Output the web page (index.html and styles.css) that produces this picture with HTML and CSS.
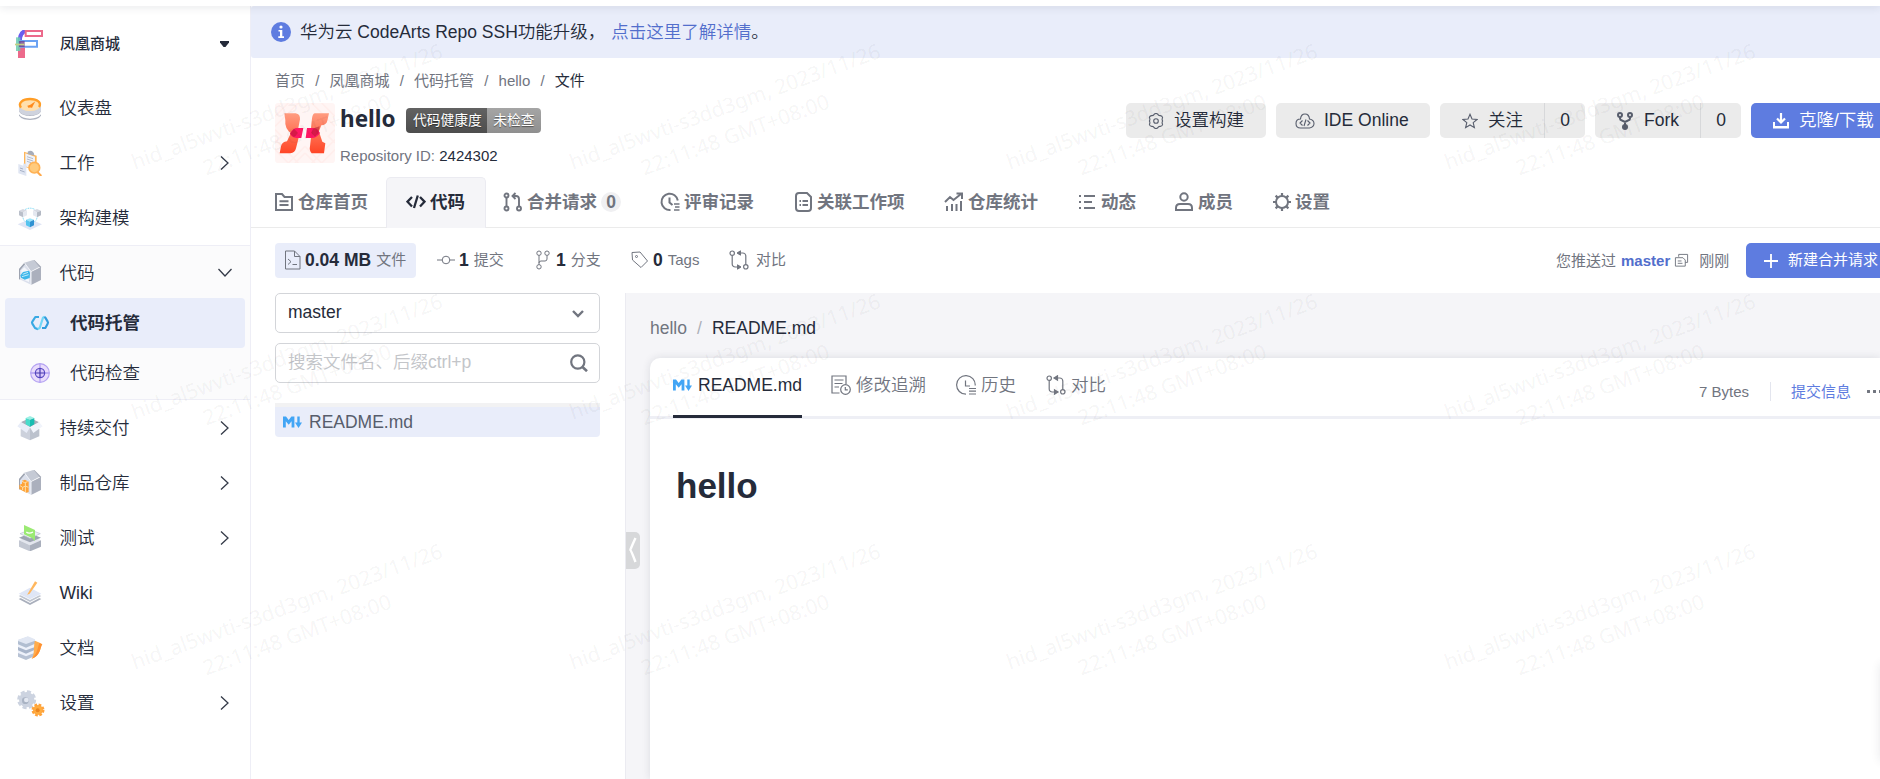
FILE: index.html
```html
<!DOCTYPE html>
<html lang="zh-CN">
<head>
<meta charset="utf-8">
<title>hello - 代码托管</title>
<link rel="stylesheet" href="styles.css">
</head>
<body>
<svg class="defs" aria-hidden="true">
  <defs>
    <symbol id="chev-right" viewBox="0 0 12 16"><path d="M2 1.5 9 8 2 14.5" fill="none" stroke="currentColor" stroke-width="1.3"/></symbol>
    <symbol id="compare" viewBox="0 0 20 20"><g fill="none" stroke="currentColor" stroke-width="1.2"><circle cx="3.2" cy="3.2" r="2.2"/><circle cx="16.8" cy="16.8" r="2.2"/><path d="M3.2 5.400V14a3 3 0 0 0 3 3H11M16.800 14.600V6a3 3 0 0 0-3-3H9"/></g><path d="M8 3 11.500.8v4.400zM12 17 8.500 14.800v4.400z" fill="currentColor"/></symbol>
    <symbol id="md" viewBox="0 0 19 14"><path d="M0 12.500V1.500h3l2.700 3.500L8.400 1.500H11.400v11H8.600V6.200L5.700 9.800 2.800 6.200V12.500zM14.300 1.500h2.400v6H19L15.500 13 12 7.500h2.300z" fill="#42a5f5"/></symbol>
    <symbol id="history" viewBox="0 0 20 20"><g fill="none" stroke="currentColor" stroke-width="1.2"><path d="M10 19.200A9.300 9.300 0 1 1 19.200 10.500"/><path d="M9.500 5.500V11H14M13 13.500h7M13 16.200h7M13 19h7"/></g></symbol>
  </defs>
</svg>
<div class="topbar"></div>
<div class="app">
  <aside class="sidebar">
    <div class="project">
      <svg class="project-logo" viewBox="0 0 84 84"><path d="M9 84V35h21v49z" fill="#ec6a8b"/><path d="M14 38c0-22 6-35 22-35" fill="none" stroke="#6a5cf0" stroke-width="12"/><path d="M22 30c0-10 4-18 13-22h3v8c-8 3-9 7-9 14z" fill="#fff" opacity=".65"/><path d="M32 3h49v15H32z" fill="#fff" stroke="#ec6a8b" stroke-width="6"/><path d="M14 33h52v17H14z" fill="#fff" stroke="#6ba2f3" stroke-width="6"/><path d="M3 22h13v41H3z" fill="#6dceb2" opacity=".85"/><path d="M12 33h17v18H12z" fill="#6d3f91" opacity=".8"/><path d="M0 41h28v5H0z" fill="#c5cf86"/></svg>
      <span class="project-name">凤凰商城</span>
      <svg class="caret" viewBox="0 0 9 7"><path d="M0 0h9v1.500L5.500 6h-2L0 1.500z" fill="#252b3a"/></svg>
    </div>
    <a class="nav">
      <svg class="nav-icon" viewBox="0 0 78 78"><path d="M6 38v23c3 8 14 14 33 14s30-6 33-14V38z" fill="#adb2bf"/><path d="M6 49c6 10 18 14 33 14s27-4 33-14v9c-6 9-18 13-33 13S12 67 6 58z" fill="#fff"/><path d="M6 31v17c4 8 15 13 33 13s29-5 33-13V31z" fill="#cfd3de"/><ellipse cx="39" cy="29" rx="33" ry="19" fill="#ffe0ae"/><path d="M12 38C2 24 17 12 39 12s36 11 27 24" fill="none" stroke="#ff9d26" stroke-width="7"/><path d="M34 34 55 19 45 38z" fill="#ff8a1c"/><path d="M31 32l11-3 4 8-12 1z" fill="#ff8a1c"/></svg>
      <span>仪表盘</span>
    </a>
    <a class="nav">
      <svg class="nav-icon" viewBox="0 0 78 78"><path d="M21 5l38 12v44L21 50z" fill="#ffb657"/><path d="M25 10l29 10v39L25 49z" fill="#eef1f8"/><path d="M32 5c8-6 20-2 20 12l-20-5z" fill="#a7adba"/><path d="M30 20l18 6M30 27l18 6M30 34l12 4" stroke="#b5bdcb" stroke-width="3"/><path d="M4 42l15 5v-7l9 3v35L4 70z" fill="#dfe5f2"/><path d="M9 54l9 3M9 61l14 5" stroke="#a7b2c7" stroke-width="3"/><path d="M61 66 73 78" stroke="#ffa94b" stroke-width="6"/><circle cx="52" cy="53" r="16" fill="#ffcb7d" stroke="#ffb255" stroke-width="5"/></svg>
      <span>工作</span>
      <svg class="chev"><use href="#chev-right"/></svg>
    </a>
    <a class="nav">
      <svg class="nav-icon" viewBox="0 0 78 78"><path d="M2 58 39 42l36 16-36 17z" fill="#dfe5f5"/><path d="M24 14c8-6 22-6 30 0M18 38c2 10 8 13 12 15M60 38c-2 10-8 13-12 15" fill="none" stroke="#67d1f2" stroke-width="2.500" stroke-dasharray="3 2"/><path d="M6 17l12-5 12 5-12 5z" fill="#d5d9e2"/><path d="M6 17l12 5v15L6 31z" fill="#b9bfca"/><path d="M30 17l-12 5v15l12-6z" fill="#e4e8f0"/><path d="M48 17l12-5 12 5-12 5z" fill="#d5d9e2"/><path d="M48 17l12 5v15l-12-6z" fill="#e4e8f0"/><path d="M72 17l-12 5v15l12-6z" fill="#b3b9c4"/><path d="M27 44l12-4 12 4-12 6z" fill="#9de5fb"/><path d="M27 44l12 6v17l-12-6z" fill="#55c3ee"/><path d="M51 44l-12 6v17l12-6z" fill="#3092d2"/></svg>
      <span>架构建模</span>
    </a>
    <div class="nav-group">
      <a class="nav">
        <svg class="nav-icon" viewBox="0 0 78 78"><path d="M6 27 24 8l18 18v48L6 57z" fill="#dbe0ec"/><path d="M13 31l9-9 14 13v31L13 56z" fill="#f4f6fb"/><path d="M22 8 49 0l19 20-26 14z" fill="#c5cad5"/><path d="M6 27 22 8l3 4L9 31v28l-3-2z" fill="#9da3b0"/><path d="M42 36l30-15v39L42 75z" fill="#abb0bd"/><path d="M22 8 42 35v40" fill="none" stroke="#f1f3f8" stroke-width="3"/><path d="M49 0l4 1 20 20-3 3z" fill="#a3a9b6"/><path d="M10 46l8-10 18-4 3 7-1 15-15 5-11-6z" fill="#3eb6ea"/><path d="M17 43l16-6M15 50l20-6" stroke="#bdeafb" stroke-width="3"/></svg>
        <span>代码</span>
        <svg class="chev-down" viewBox="0 0 16 12"><path d="M1.500 2 8 9l6.500-7" fill="none" stroke="currentColor" stroke-width="1.300"/></svg>
      </a>
      <a class="subnav active">
        <svg class="sub-icon" viewBox="0 0 60 60"><g fill="none" stroke-width="6.500" stroke-linejoin="round"><path d="M27 12H16L7 26q-2 3 0 6l8 13 9 4" stroke="#39a9e3"/><path d="M23 48l6-3L39 14l5-3" stroke="#72d7f6"/><path d="M43 12l3 2 7 12q2 3 0 6l-7 13H36" stroke="#319cdd"/></g></svg>
        <span>代码托管</span>
      </a>
      <a class="subnav">
        <svg class="sub-icon" viewBox="0 0 60 60"><circle cx="30" cy="30" r="28" fill="#e9dcfb" stroke="#b3a1f2" stroke-width="3.500"/><path d="M30 2v56M2 30h56" stroke="#b3a1f2" stroke-width="4"/><circle cx="30" cy="30" r="14" fill="#d9c8fa" stroke="#5b4cc4" stroke-width="3.500"/><path d="M30 16v28M16 30h28" stroke="#4739ad" stroke-width="3.500"/></svg>
        <span>代码检查</span>
      </a>
    </div>
    <a class="nav">
      <svg class="nav-icon" viewBox="0 0 78 78"><path d="M11 22 39 9l28 13-28 15z" fill="#a9afbb"/><path d="M11 42v22l28 12V38z" fill="#ccd1dc"/><path d="M67 42v22L39 76V38z" fill="#bcc2cd"/><path d="M26 9 39 3l13 6-13 6z" fill="#9df0e4"/><path d="M26 9l13 6v20l-13-7z" fill="#46dccb"/><path d="M52 9l-13 6v20l13-7z" fill="#18bdb2"/><path d="M1 34 12 21l27 16-10 17z" fill="#e8edf8"/><path d="M77 34 66 21 39 37l10 17z" fill="#f1f4fb"/></svg>
      <span>持续交付</span><svg class="chev"><use href="#chev-right"/></svg>
    </a>
    <a class="nav">
      <svg class="nav-icon" viewBox="0 0 78 78"><path d="M6 27 24 8l18 18v48L6 57z" fill="#dbe0ec"/><path d="M22 8 49 0l19 20-26 14z" fill="#c5cad5"/><path d="M6 27 22 8l3 4L9 31v28l-3-2z" fill="#9da3b0"/><path d="M42 36l30-15v39L42 75z" fill="#abb0bd"/><path d="M22 8 42 35v40" fill="none" stroke="#f1f3f8" stroke-width="3"/><path d="M49 0l4 1 20 20-3 3z" fill="#a3a9b6"/><path d="M7 45l8-4v-9l9-3 11 6v31l-7 2-21-11z" fill="#ffa236"/><path d="M15 34l8 4 9-3M9 47l8 5 9-4 8 4M25 39v27M17 52v8" fill="none" stroke="#ffe0a8" stroke-width="3"/></svg>
      <span>制品仓库</span><svg class="chev"><use href="#chev-right"/></svg>
    </a>
    <a class="nav">
      <svg class="nav-icon" viewBox="0 0 78 78"><path d="M6 46l33-14 33 14-33 15z" fill="#e3e6ee"/><path d="M6 46l33 15v18L6 65z" fill="#c2c7d2"/><path d="M72 46L39 61v18l33-14z" fill="#a9afbc"/><path d="M6 38l33-13 33 13-33 14z" fill="#9da4b1"/><path d="M9 26l30-12 31 12-31 14z" fill="#edf0f6" stroke="#bac0cb" stroke-width="2"/><path d="M21 0l33 15v33l-9-9-24-11z" fill="#9bea73"/><path d="M28 21c7 6 13 4 20 0" fill="none" stroke="#fff" stroke-width="4"/></svg>
      <span>测试</span><svg class="chev"><use href="#chev-right"/></svg>
    </a>
    <a class="nav">
      <svg class="nav-icon" viewBox="0 0 78 78"><path d="M5 57l34-15 34 15-34 18z" fill="#a9afbc"/><path d="M5 51l34-15 34 15-34 18z" fill="#fff"/><path d="M5 48l34-15 34 15-34 18z" fill="#bfc5d0"/><path d="M5 43l34-15 34 15-34 17z" fill="#fff"/><path d="M5 41l34-18 34 18-34 17z" fill="#dfe6f6"/><path d="M33 40 54 4l7 4-22 32-8 5z" fill="#ffb75e"/></svg>
      <span>Wiki</span>
    </a>
    <a class="nav">
      <svg class="nav-icon" viewBox="0 0 78 78"><path d="M3 48l29-11 22 10v16L27 75 3 65z" fill="#b7c2d4"/><path d="M3 54l24 10 27-11v-8L30 36 3 45z" fill="#edf1fa"/><path d="M3 33l29-11 22 10v12L27 56 3 46z" fill="#a8b5ca"/><path d="M3 36l24 10 27-10v-8L30 17 3 28z" fill="#edf1fa"/><path d="M3 16 32 5l22 10v11L27 38 3 28z" fill="#b1bed1"/><path d="M3 18l24 9 27-10v-4L33 4 3 14z" fill="#e1e7f3"/><path d="M54 17c10 4 16 7 22 11-6 4-4 36-32 43 10-12 5-44 10-54z" fill="#ffad4d"/><path d="M67 24c-5 15-6 31-23 47 27-6 25-35 32-43z" fill="#ff9131"/></svg>
      <span>文档</span>
    </a>
    <a class="nav">
      <svg class="nav-icon wide" viewBox="0 0 84 84"><circle cx="29" cy="32" r="23" fill="#ccd3e0"/><circle cx="29" cy="32" r="24" fill="none" stroke="#ccd3e0" stroke-width="9" stroke-dasharray="12 6.850"/><circle cx="25" cy="35" r="10" fill="#a9b3c3"/><circle cx="28" cy="33" r="7" fill="#e3e8f1"/><circle cx="63" cy="63" r="15" fill="#ffac40"/><circle cx="63" cy="63" r="16" fill="none" stroke="#ffa23a" stroke-width="7" stroke-dasharray="8 4.560"/><circle cx="62" cy="64" r="6" fill="#ec851e"/></svg>
      <span>设置</span><svg class="chev"><use href="#chev-right"/></svg>
    </a>
  </aside>

  <main class="main">
    <div class="banner">
      <svg class="info" viewBox="0 0 20 20"><circle cx="10" cy="10" r="10" fill="#5e7ce0"/><circle cx="10" cy="5" r="1.600" fill="#fff"/><path d="M7.500 8h3.800v6.200H13V16H7.300v-1.800H9V9.600H7.500z" fill="#fff"/></svg>
      <span>华为云 CodeArts Repo SSH功能升级，</span><a class="link">点击这里了解详情</a><span>。</span>
    </div>
    <nav class="crumbs"><span>首页</span><i>/</i><span>凤凰商城</span><i>/</i><span>代码托管</span><i>/</i><span>hello</span><i>/</i><b>文件</b></nav>

    <header class="repo">
      <svg class="repo-logo" viewBox="0 0 180 180">
        <defs><linearGradient id="lg" x1="0" y1="0" x2="0" y2="1"><stop offset="0" stop-color="#ff9c80"/><stop offset="1" stop-color="#ff4526"/></linearGradient></defs>
        <rect width="180" height="180" rx="10" fill="#fff5f4"/>
        <path d="M0 40 40 0M0 70 70 0M110 0l70 70M140 0l40 40M0 110l70 70M0 140l40 40M180 110l-70 70M180 140l-40 40M90 130l-50 50M90 130l50 50M90 150l-30 30M90 150l30 30M0 80l20 20-20 20M180 80l-20 20 20 20" stroke="#ffeeec" stroke-width="5" fill="none"/>
        <path d="M28 31H62Q76 33 75 49L70 75 49 92Q28 76 31 52zM119 31h43l-5 22q-3 13-18 14l-9 22-22-15 3-28q2-13 8-15zM49 87l22 17-8 32q-3 13-17 15H14l4-21q3-13 18-15zM108 103l25-14 9 27 9 5-4 30h-37q-8-9-5-21z" fill="url(#lg)"/>
        <path d="M45 92q7-17 24-17h16l-6 30H64q-14-2-19-13zM96 75h20q12 2 19 15-10 15-24 15H92z" fill="#ff1764"/><path d="M57 77l-12 15 12 11 12-13zM116 76l18-6-4 20-10 11-12-12z" fill="#b51b32" opacity=".55"/>
      </svg>
      <div class="repo-meta">
        <div class="repo-title"><h1>hello</h1><span class="badge"><span>代码健康度</span><span>未检查</span></span></div>
        <div class="repo-id">Repository ID: <b>2424302</b></div>
      </div>
      <div class="actions">
        <button class="btn b-build"><svg viewBox="0 0 16 16"><path d="M6.200 1.200Q8-.2 9.800 1.200q.6 1.500 2.200 1.400 2.300-.2 2.600 2.200-1 1.400 0 3.200-1 1.800 0 3.200-.3 2.400-2.600 2.200-1.600-.1-2.200 1.400-1.800 1.400-3.600 0-.6-1.500-2.200-1.400-2.300.2-2.600-2.200 1-1.400 0-3.200 1-1.800 0-3.200.3-2.400 2.600-2.200 1.600.1 2.200-1.400z"/><circle cx="8" cy="8" r="2.300"/></svg>设置构建</button>
        <button class="btn b-ide"><svg viewBox="0 0 20 16"><path d="M5.500 6Q6 1 10 1t4.500 5Q19 7 19 10.500T14.500 15h-9Q1 15 1 10.500T5.500 6zM7.500 7.500 5 10l2.500 2.500M12.500 7.500 15 10l-2.500 2.500M11 6.500 9 13"/></svg>IDE Online</button>
        <div class="btn b-star"><span><svg viewBox="0 0 16 16"><path d="M8 1.300 10 6l5 .5-3.800 3.200 1.200 4.900L8 12l-4.400 2.600 1.200-4.900L1 6.500 6 6z"/></svg>关注</span><em>0</em></div>
        <div class="btn b-fork"><span><svg viewBox="0 0 16 18"><g stroke-width="2"><circle cx="3" cy="3" r="2"/><circle cx="13" cy="3" r="2"/><path d="M3 5v1.500Q3 8 5 8.500L8 10l3-1.500Q13 8 13 6.500V5M8 10v4"/></g><circle cx="8" cy="15" r="3" fill="#575d6c" stroke="none"/></svg>Fork</span><em>0</em></div>
        <button class="btn primary b-clone"><svg viewBox="0 0 16 16"><path d="M0 9h2v4h12V9h2v6.500H0z" fill="#fff" stroke="none"/><path d="M8 0v9M4 5.500l4 4 4-4" stroke="#fff" stroke-width="2.200"/></svg>克隆/下载</button>
      </div>
    </header>

    <nav class="tabs">
      <a><svg viewBox="0 0 20 20"><g stroke-width="2"><path d="M2 2h6l2.500 3H18v13H2zM5.500 9.300h9M5.500 13h9"/></g></svg>仓库首页</a>
      <a class="active"><svg viewBox="0 0 20 20"><path d="M6 5 1.500 9.700 6 14.500M14 5l4.500 4.700L14 14.500M11.800 3.500 8 16" stroke-width="2.300"/></svg>代码</a>
      <a><svg viewBox="0 0 20 20"><g stroke-width="1.900"><circle cx="3.500" cy="3.500" r="2"/><circle cx="3.500" cy="16.500" r="2"/><circle cx="16" cy="16.500" r="2"/><path d="M3.500 5.500v9M16 14.500V7q0-3-3-3h-3M12.500 1 9.500 4l3 3"/></g></svg>合并请求<em>0</em></a>
      <a><svg viewBox="0 0 20 20"><path d="M10.500 18A8.200 8.200 0 1 1 17.800 8.500M9.500 5.500v5l3 2.500" stroke-width="2"/><path d="M14 12h5.500M15 15h4.500M14 18h5.500" stroke-width="1.700"/></svg>评审记录</a>
      <a class="narrow"><svg viewBox="0 0 20 20"><g stroke-width="2"><path d="M2 4q0-3 3-3h8l4 4v11q0 3-3 3H5q-3 0-3-3zM5.500 9h1.500M8.500 9H14M5.500 13h1.500M8.500 13H14"/></g></svg>关联工作项</a>
      <a><svg viewBox="0 0 20 20"><path d="M1 10 6 5l3.500 3L17 2M12.500 1.500H18V7M3 14v5M8 12v7M12.500 12v7M17 9v10" stroke-width="2"/></svg>仓库统计</a>
      <a class="narrow"><svg viewBox="0 0 20 20"><path d="M1 4h2M6 4h11M1 10h2M6 10h8M1 16h2M6 16h11" stroke-width="2"/></svg>动态</a>
      <a><svg viewBox="0 0 20 20"><g stroke-width="2"><circle cx="10" cy="5" r="3.700"/><path d="M2 18v-2q0-4 4-4h8q4 0 4 4v2z"/></g></svg>成员</a>
      <a class="narrow"><svg viewBox="0 0 20 20"><circle cx="10" cy="10" r="6" stroke-width="2"/><path d="M10 1v3M10 16v3M1 10h3M16 10h3M3.600 3.600l2 2M14.400 14.400l2 2M16.400 3.600l-2 2M5.600 14.400l-2 2" stroke-width="2.200"/></svg>设置</a>
    </nav>

    <div class="stats">
      <a class="s-file"><svg viewBox="0 0 18 20"><path d="M1.500 1h9L16 6.500V19H1.500zM10.500 1v5.500H16M4 9l3 2.700L4 14.500M8.500 14.500H13"/></svg><b>0.04 MB</b><span>文件</span></a>
      <a class="s-commit"><svg viewBox="0 0 18 20"><circle cx="9" cy="10" r="3.800"/><path d="M0 10h5.200M12.800 10H18"/></svg><b>1</b><span>提交</span></a>
      <a class="s-branch"><svg viewBox="0 0 14 20"><circle cx="3" cy="3.200" r="2.200"/><circle cx="11" cy="3.200" r="2.200"/><circle cx="3" cy="16.800" r="2.200"/><path d="M3 5.400v9.200M11 5.400V9q0 2-2 2H5q-2 0-2 2"/></svg><b>1</b><span>分支</span></a>
      <a class="s-tag"><svg viewBox="0 0 18 20"><path d="M1 2.500 9 2l7.500 9-6.500 6.500L1.500 10z"/><circle cx="5.500" cy="6.500" r="1"/></svg><b>0</b><span>Tags</span></a>
      <a class="s-cmp"><svg><use href="#compare"/></svg><span>对比</span></a>
      <div class="push"><span>您推送过</span><strong>master</strong><svg viewBox="0 0 16 16"><path d="M5 4V1.500h9.500V10H12M1.500 5h8L12 7.500V14H1.500zM4 8.500h4M4 11h5"/></svg><span>刚刚</span></div>
      <button class="btn primary b-mr"><svg viewBox="0 0 14 14"><path d="M7 0v14M0 7h14" stroke="#fff" stroke-width="1.800"/></svg>新建合并请求</button>
    </div>

    <div class="work">
      <section class="tree">
        <div class="field"><span>master</span><svg class="f-down" viewBox="0 0 12 8"><path d="M1 1l5 5 5-5" fill="none" stroke="#71757f" stroke-width="2.400"/></svg></div>
        <div class="field hint"><span>搜索文件名、后缀ctrl+p</span><svg class="f-search" viewBox="0 0 18 18"><circle cx="7.800" cy="8" r="6.600" fill="none" stroke="#71757f" stroke-width="2.200"/><path d="M12.500 13l4.500 4.200" stroke="#71757f" stroke-width="2.600"/></svg></div>
        <div class="file"><svg class="md"><use href="#md"/></svg>README.md</div>
      </section>
      <section class="viewer">
        <div class="handle"><svg viewBox="0 0 8 26"><path d="M6.500 1Q1 13 1.500 13T6.500 25" fill="none" stroke="#fff" stroke-width="2.400"/></svg></div>
        <div class="path"><span>hello</span><i>/</i><b>README.md</b></div>
        <div class="card">
          <div class="card-tabs">
            <a class="on"><svg class="md"><use href="#md"/></svg>README.md</a>
            <a><svg viewBox="0 0 20 20"><path d="M8.500 18H1V1h14v8M3.500 5h9M3.500 8.500h8M3.500 12H8"/><circle cx="14.500" cy="14.500" r="4.800"/><path d="M14.300 12v2.800h2.500"/></svg>修改追溯</a>
            <a><svg><use href="#history"/></svg>历史</a>
            <a><svg><use href="#compare"/></svg>对比</a>
            <div class="card-info"><span>7 Bytes</span><span class="commit">提交信息</span><span class="dots"></span></div>
          </div>
          <div class="doc"><h2>hello</h2></div>
        </div>
      </section>
    </div>
  </main>
</div>
<div class="float"></div>
<div class="watermark">
  <p>hid_al5wvti-s3dd3gm, 2023/11/26<br>22:11:48 GMT+08:00</p><p>hid_al5wvti-s3dd3gm, 2023/11/26<br>22:11:48 GMT+08:00</p><p>hid_al5wvti-s3dd3gm, 2023/11/26<br>22:11:48 GMT+08:00</p><p>hid_al5wvti-s3dd3gm, 2023/11/26<br>22:11:48 GMT+08:00</p>
  <p>hid_al5wvti-s3dd3gm, 2023/11/26<br>22:11:48 GMT+08:00</p><p>hid_al5wvti-s3dd3gm, 2023/11/26<br>22:11:48 GMT+08:00</p><p>hid_al5wvti-s3dd3gm, 2023/11/26<br>22:11:48 GMT+08:00</p><p>hid_al5wvti-s3dd3gm, 2023/11/26<br>22:11:48 GMT+08:00</p>
  <p>hid_al5wvti-s3dd3gm, 2023/11/26<br>22:11:48 GMT+08:00</p><p>hid_al5wvti-s3dd3gm, 2023/11/26<br>22:11:48 GMT+08:00</p><p>hid_al5wvti-s3dd3gm, 2023/11/26<br>22:11:48 GMT+08:00</p><p>hid_al5wvti-s3dd3gm, 2023/11/26<br>22:11:48 GMT+08:00</p>
</div>
</body>
</html>
```

FILE: styles.css
```css
* { box-sizing: border-box; }
body {
  margin: 0;
  width: 1880px;
  height: 779px;
  overflow: hidden;
  position: relative;
  background: #fff;
  color: #252b3a;
  font: 17.5px/24px "Liberation Sans", "Noto Sans CJK SC", sans-serif;
}
.defs { position: absolute; width: 0; height: 0; }
i, em { font-style: normal; }
span, a, button, b, strong { white-space: nowrap; }
svg { flex: none; display: block; }

.topbar {
  position: relative;
  z-index: 2;
  height: 6px;
  background: #fff;
  box-shadow: 0 1px 8px rgba(37, 43, 58, .13);
}
.app { display: flex; height: 773px; }

/* sidebar */
.sidebar { width: 251px; flex: none; border-right: 1px solid #eeeef6; color: #252b3a; font-weight: 350; }
.project { display: flex; align-items: center; height: 74px; padding: 2px 21px 0 15px; }
.project-logo { width: 28px; height: 28px; }
.project-name { margin-left: 17px; font-size: 15px; font-weight: 500; color: #252b3a; flex: 1; }
.caret { width: 9px; height: 7px; }
.nav { display: flex; align-items: center; height: 55px; padding: 0 19px 0 17px; }
.nav span { flex: 1; margin-left: -.5px; }
.nav-icon { width: 26px; height: 26px; margin-right: 17px; }
.nav-icon.wide { width: 28px; height: 28px; margin-right: 15px; }
.chev { width: 12px; height: 16px; color: #343a48; }
.chev-down { width: 16px; height: 12px; margin-right: -2px; color: #343a48; }
.nav-group { height: 155px; background: #fbfbfc; border-top: 1px solid #eeeef6; border-bottom: 1px solid #eeeef6; }
.nav-group .nav { height: 52px; padding-top: 1px; }
.subnav { display: flex; align-items: center; height: 50px; margin: 0 5px; padding-left: 25px; border-radius: 4px; }
.subnav.active { background: #e9edfa; font-weight: 700; }
.sub-icon { width: 20px; height: 20px; margin-right: 20px; }

/* main column */
.main { flex: 1; min-width: 0; display: flex; flex-direction: column; overflow: hidden; }
.banner { flex: none; display: flex; align-items: center; height: 52px; padding-left: 20px; background: #e9edfa; border-radius: 3px 0 0 3px; font-weight: 350; }
.info { width: 20px; height: 20px; margin-right: 9px; }
.link { color: #526ecc; margin-left: 6px; }
.crumbs { flex: none; display: flex; align-items: center; height: 45px; padding-left: 24px; font-size: 15px; color: #71757f; }
.crumbs i { width: 24.5px; text-align: center; }
.crumbs b { font-weight: 400; color: #252b3a; }

.repo { flex: none; display: flex; height: 74px; padding-left: 24px; }
.repo-logo { width: 60px; height: 60px; }
.repo-meta { margin-left: 5px; }
.repo-title { display: flex; align-items: center; height: 35px; }
h1 { margin: -3px 0 0; width: 66px; font: 700 22.5px/30px "Noto Sans", sans-serif; }
.badge { display: flex; height: 25px; border-radius: 4px; overflow: hidden; font-size: 13.75px; line-height: 26px; color: #fff; text-shadow: 0 1px 1px rgba(0, 0, 0, .45); }
.badge span { width: 81px; padding-left: 2px; text-align: center; background: linear-gradient(#626262, #4d4d4d); }
.badge span + span { width: 54px; padding: 0; background: linear-gradient(#a5a5a5, #8f8f8f); }
.repo-id { height: 36px; line-height: 36px; font-size: 15px; color: #71757f; }
.repo-id b { font-weight: 400; color: #252b3a; }
.actions { display: flex; gap: 10px; margin-left: auto; height: 35px; }
.btn { flex: none; display: flex; align-items: center; height: 35px; padding: 0 0 2px; border: 0; border-radius: 5px; background: #ebebeb; color: #252b3a; font: 350 17.5px/24px "Liberation Sans", "Noto Sans CJK SC", sans-serif; }
.btn svg { fill: none; stroke: #575d6c; stroke-width: 1.1; position: relative; top: 1px; }
.btn span { display: flex; align-items: center; height: 35px; margin-bottom: -2px; padding-bottom: 2px; border-right: 1px solid #d7d8da; }
.btn em { flex: 1; text-align: center; }
.b-build { width: 140px; padding-left: 22px; }
.b-build svg { width: 16px; height: 16px; margin-right: 10px; }
.b-ide { width: 154px; padding-left: 19px; }
.b-ide svg { width: 20px; height: 16px; margin-right: 9px; }
.b-star { width: 145px; }
.b-star span { width: 105px; padding-left: 22px; }
.b-star svg { width: 16px; height: 16px; margin-right: 10px; }
.b-fork { width: 146px; }
.b-fork span { width: 106px; padding-left: 22px; }
.b-fork svg { width: 16px; height: 18px; margin-right: 11px; }
.btn.primary { background: #5e7ce0; color: #fff; border-radius: 5px 0 0 5px; }
.b-clone { width: 129px; padding-left: 22px; }
.b-clone svg { width: 16px; height: 16px; margin-right: 10px; }

.tabs { flex: none; display: grid; grid-template-columns: 129px 100px 157px 134px 150px 134px 96px 98px 1fr; height: 51px; padding-left: 6px; border-bottom: 1px solid #ebebeb; color: #71757f; font-weight: 700; }
.tabs a { display: flex; align-items: center; padding: 0 0 2px 17px; height: 51px; }
.tabs svg { width: 20px; height: 20px; margin-right: 4px; fill: none; stroke: currentColor; }
.tabs .narrow svg { margin-right: 3px; }
.tabs .active { background: #f5f5f8; color: #252b3a; padding-left: 19px; border: 1px solid #ebebf1; border-bottom: 0; border-radius: 5px 5px 0 0; }
.tabs em { width: 20px; height: 20px; margin-left: 4px; border-radius: 10px; background: #f0f0f2; text-align: center; line-height: 20px; }

.stats { flex: none; display: flex; align-items: center; height: 65px; padding-left: 24px; font-size: 15px; color: #71757f; }
.stats a { display: flex; align-items: center; height: 35px; padding-bottom: 2px; }
.stats svg { fill: none; stroke: #71757f; height: 20px; }
.stats b { color: #252b3a; font-size: 17.5px; font-weight: 700; margin-right: 5px; }
.stats a span { padding-top: 1px; }
.stats .s-file { width: 141px; padding-left: 9px; background: #e9edfa; border-radius: 4px; }
.s-file svg { width: 18px; margin-right: 3px; }
.s-commit { width: 99px; margin-left: 21px; }
.s-commit svg { width: 18px; margin-right: 4px; }
.s-branch { width: 95px; }
.s-branch svg { width: 14px; margin-right: 6px; }
.s-tag { width: 98px; }
.s-tag svg { width: 18px; margin-right: 4px; }
.s-cmp svg { width: 20px; margin-right: 7px; }
.push { display: flex; align-items: center; margin-left: auto; width: 190px; }
.push strong { color: #526ecc; margin: 0 4px 0 5px; }
.push svg { width: 15px; height: 15px; margin-right: 10px; }
.stats .b-mr { width: 134px; padding-left: 18px; font-size: 15px; font-weight: 400; }
.stats .b-mr svg { width: 14px; height: 14px; margin-right: 10px; }

/* file tree and viewer */
.work { flex: 1; display: flex; min-height: 0; }
.tree { width: 374px; flex: none; padding: 0 25px 0 24px; }
.field { display: flex; align-items: center; justify-content: space-between; height: 40px; margin-bottom: 10px; padding: 0 13px 2px 12px; border: 1px solid #d3d5d9; border-radius: 5px; }
.hint { color: #c3c5c9; font-weight: 350; padding-right: 11px; }
.f-down { width: 12px; height: 8px; margin: 4px 2px 0 0; }
.f-search { width: 18px; height: 18px; margin-top: 2px; }
.md { width: 19px; height: 14px; }
.file { display: flex; align-items: center; height: 34px; margin-top: 20px; padding: 4px 0 0 8px; border-radius: 0 0 4px 4px; background: linear-gradient(#f2f2f3 4px, #e9edfa 4px); color: #575d6c; }
.file .md { margin-right: 7px; }
.viewer { position: relative; flex: 1; min-width: 0; display: flex; flex-direction: column; background: #f5f5f8; border-left: 1px solid #ebebf1; }
.handle { position: absolute; left: 0; top: 239px; width: 14px; height: 37px; padding: 5px 0 0 3px; background: #d7d8da; border-radius: 0 5px 5px 0; }
.handle svg { width: 8px; height: 26px; }
.path { flex: none; height: 65px; padding: 0 0 0 24px; line-height: 71px; color: #71757f; }
.path i { display: inline-block; width: 25px; text-align: center; color: #adb0b8; }
.path b { font-weight: 400; color: #252b3a; }
.card { flex: 1; margin-left: 24px; background: #fff; border-radius: 10px 0 0 0; box-shadow: 0 0 8px rgba(37, 43, 58, .12); }
.card-tabs { display: flex; height: 61px; padding-left: 23px; border-bottom: 3px solid #eeeff5; color: #71757f; font-weight: 350; }
.card-tabs a { display: flex; align-items: center; height: 60px; padding-bottom: 6px; margin-right: 30px; }
.card-tabs a svg { width: 20px; height: 20px; margin-right: 5px; fill: none; stroke: currentColor; stroke-width: 1.2; }
.card-tabs .on { color: #252b3a; border-bottom: 3px solid #252b3a; padding-bottom: 3px; margin-right: 29px; }
.card-tabs .on .md { width: 19px; height: 14px; margin-right: 6px; stroke: none; }
.card-info { margin-left: auto; display: flex; align-items: center; height: 67px; width: 181px; font-size: 15px; font-weight: 400; }
.commit { margin-left: 21px; padding-left: 20px; line-height: 19px; border-left: 1px solid #e3e5ee; color: #5e7ce0; }
.dots { width: 13px; height: 3px; margin-left: 16px; background: radial-gradient(circle at 1.5px 1.5px, #71757f 1.4px, transparent 1.7px) 0 0 / 6px 3px; }
h2 { margin: 0; padding: 46px 0 0 26px; font-size: 35px; line-height: 42px; }

.float { position: absolute; left: 1881px; top: 664px; width: 50px; height: 97px; box-shadow: 0 0 10px rgba(37, 43, 58, .12); }
.watermark { position: absolute; z-index: 5; inset: 0; display: grid; grid-template-columns: repeat(4, 437.5px); grid-auto-rows: 250px; padding-left: 73px; overflow: hidden; pointer-events: none; }
.watermark p { margin: -10px -10px 0; align-self: center; text-align: center; white-space: nowrap; font: 20.8px/30px "Noto Sans", sans-serif; color: rgba(0, 0, 0, .055); transform: rotate(-20deg); }
```
